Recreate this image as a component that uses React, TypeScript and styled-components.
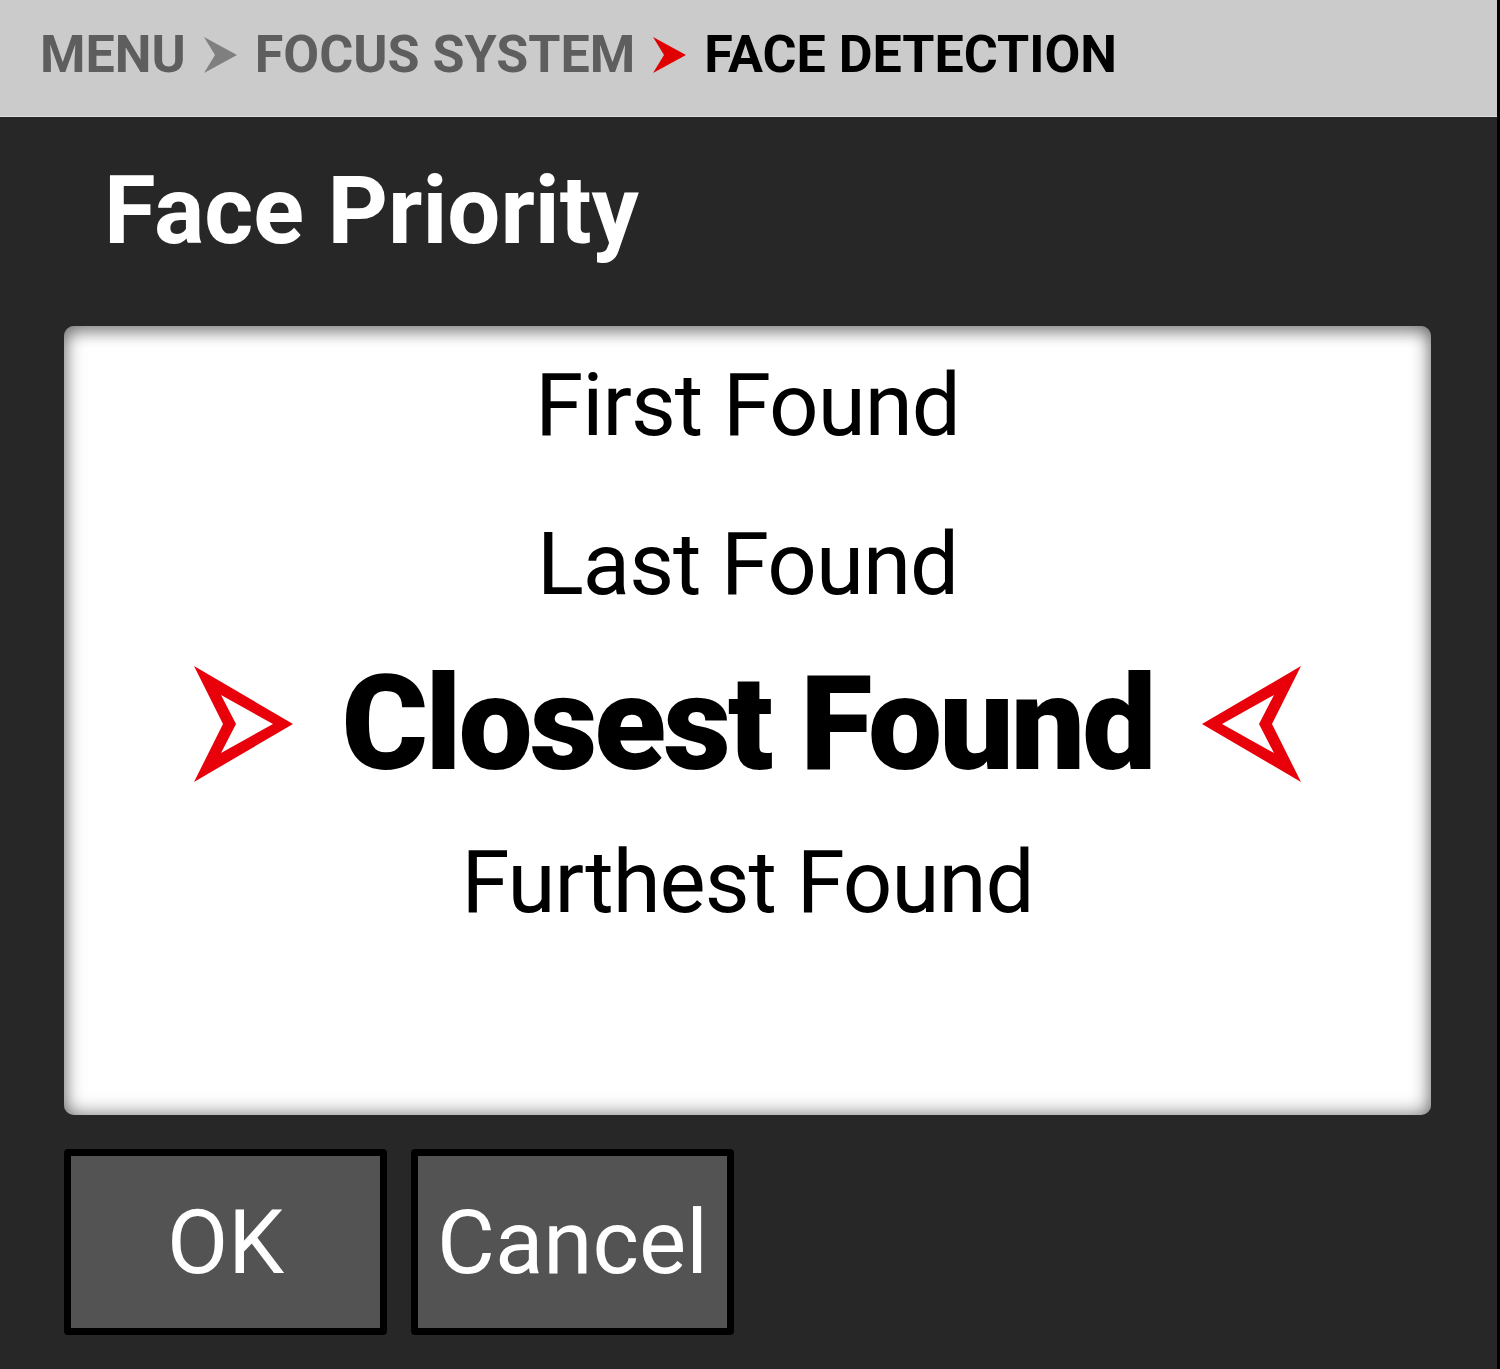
import React from "react";
import styled, { createGlobalStyle } from "styled-components";

const Global = createGlobalStyle`
  html, body { margin: 0; padding: 0; background: #272727; }
  body { font-family: Roboto, "Noto Sans", "Liberation Sans", sans-serif; }
`;

const Screen = styled.div`
  width: 1497px;
  height: 1369px;
  background: #272727;
  border-right: 3px solid #000;
  display: flex;
  flex-direction: column;
  overflow: hidden;
`;

const Header = styled.header`
  flex: none;
  height: 117px;
  box-sizing: border-box;
  background: #cbcbcb;
  border-bottom: 1px solid #dedede;
  display: flex;
  align-items: flex-start;
  padding: 29px 0 0 40px;
`;

const Crumb = styled.span<{ $current?: boolean }>`
  font-size: 52px;
  line-height: 1;
  font-weight: 700;
  color: ${(p) => (p.$current ? "#000" : "#5e5e5e")};
  letter-spacing: 0;
`;

const Sep = styled.svg`
  width: 33px;
  height: 36px;
  margin: 8px 18px 0 18px;
  flex: none;
`;

const Title = styled.h1`
  margin: 47px 0 0 104px;
  font-size: 94px;
  line-height: 1;
  font-weight: 700;
  color: #fff;
`;

const Panel = styled.div`
  margin: 68px 66px 0 64px;
  height: 789px;
  flex: none;
  background: #fff;
  border-radius: 10px;
  box-shadow: inset 0 0 20px rgba(0, 0, 0, 0.55), inset 0 8px 14px rgba(0, 0, 0, 0.2);
  display: flex;
  flex-direction: column;
`;

const Row = styled.div`
  height: 159px;
  display: flex;
  align-items: center;
  justify-content: center;
  gap: 48px;
`;

const Option = styled.span<{ $selected?: boolean }>`
  font-size: ${(p) => (p.$selected ? "132px" : "87px")};
  font-weight: ${(p) => (p.$selected ? 900 : 400)};
  letter-spacing: ${(p) => (p.$selected ? "-3px" : "-1px")};
  line-height: 1;
  color: #000;
`;

const Arrow = styled.svg`
  width: 100px;
  height: 116px;
  flex: none;
`;

const Buttons = styled.div`
  display: flex;
  gap: 24px;
  margin: 34px 0 0 64px;
`;

const Button = styled.button`
  width: 323px;
  height: 186px;
  box-sizing: border-box;
  background: #535353;
  border: 7px solid #000;
  border-radius: 4px;
  color: #fff;
  font-family: Roboto, "Noto Sans", sans-serif;
  font-size: 89px;
  font-weight: 400;
  line-height: 1;
  padding: 0;
  display: flex;
  align-items: center;
  justify-content: center;
`;

const Chevron = ({ color }: { color: string }) => (
  <Sep viewBox="0 0 33 36">
    <path d="M0 0 L33 18 L0 36 L11 18 Z" fill={color} />
  </Sep>
);

const PointArrow = ({ flip }: { flip?: boolean }) => (
  <Arrow viewBox="0 0 100 116">
    <g transform={flip ? "translate(100 0) scale(-1 1)" : undefined}>
      <path
        fillRule="evenodd"
        fill="#e8000b"
        d="M0 0 L99 58 L0 116 L29 58 Z M27 29 L79 58 L27 87 L42 58 Z"
      />
    </g>
  </Arrow>
);

const options = ["First Found", "Last Found", "Closest Found", "Furthest Found"];
const selected = 2;

export default function App() {
  return (
    <Screen>
      <Global />
      <Header>
        <Crumb>MENU</Crumb>
        <Chevron color="#7f7f7f" />
        <Crumb>FOCUS SYSTEM</Crumb>
        <Chevron color="#e00000" />
        <Crumb $current>FACE DETECTION</Crumb>
      </Header>
      <Title>Face Priority</Title>
      <Panel>
        {options.map((o, i) => (
          <Row key={o}>
            {i === selected && <PointArrow />}
            <Option $selected={i === selected}>{o}</Option>
            {i === selected && <PointArrow flip />}
          </Row>
        ))}
      </Panel>
      <Buttons>
        <Button>OK</Button>
        <Button>Cancel</Button>
      </Buttons>
    </Screen>
  );
}
